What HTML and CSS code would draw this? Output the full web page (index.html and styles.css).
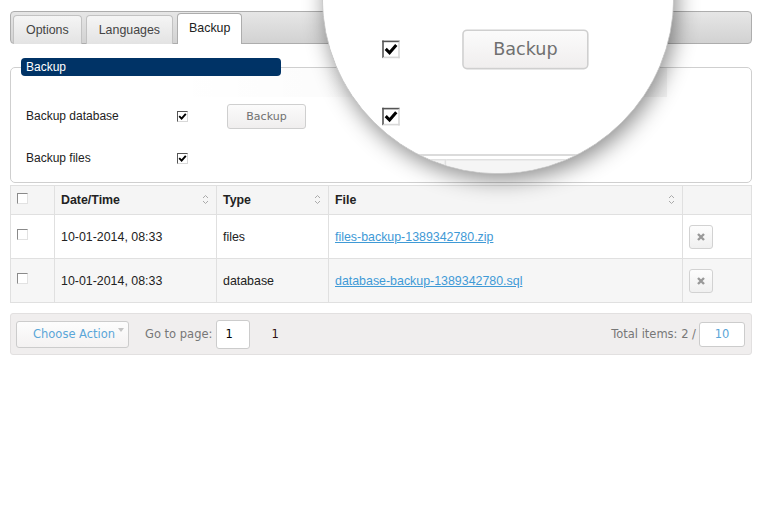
FILE: index.html
```html
<!DOCTYPE html>
<html>
<head>
    <title>Settings - Backup</title>
    <link rel="stylesheet" href="styles.css">
</head>
<body>
    <div class="page" id="page">
        <div class="tabs">
            <span class="tab">Options</span>
            <span class="tab">Languages</span>
            <span class="tab active">Backup</span>
        </div>

        <fieldset class="box">
            <legend>Backup</legend>
            <div class="row">
                <span class="label">Backup database</span>
                <span class="cb checked"><svg viewBox="0 0 9 9" width="9" height="9"><path d="M1.2 4.2 L3.6 6.6 L7.8 1.8" fill="none" stroke="#000" stroke-width="1.9"/></svg></span>
                <button class="btn">Backup</button>
            </div>
            <div class="row">
                <span class="label">Backup files</span>
                <span class="cb checked"><svg viewBox="0 0 9 9" width="9" height="9"><path d="M1.2 4.2 L3.6 6.6 L7.8 1.8" fill="none" stroke="#000" stroke-width="1.9"/></svg></span>
            </div>
        </fieldset>

        <table class="grid">
            <tr class="head">
                <th class="c-check"><span class="cb"></span></th>
                <th class="c-date">Date/Time <svg class="sort" viewBox="0 0 7 11" width="7" height="11"><path d="M1 4 L3.5 1.5 L6 4 M1 7 L3.5 9.5 L6 7" fill="none" stroke="#aaa" stroke-width="1"/></svg></th>
                <th class="c-type">Type <svg class="sort" viewBox="0 0 7 11" width="7" height="11"><path d="M1 4 L3.5 1.5 L6 4 M1 7 L3.5 9.5 L6 7" fill="none" stroke="#aaa" stroke-width="1"/></svg></th>
                <th class="c-file">File <svg class="sort" viewBox="0 0 7 11" width="7" height="11"><path d="M1 4 L3.5 1.5 L6 4 M1 7 L3.5 9.5 L6 7" fill="none" stroke="#aaa" stroke-width="1"/></svg></th>
                <th class="c-act"></th>
            </tr>
            <tr>
                <td class="c-check"><span class="cb"></span></td>
                <td>10-01-2014, 08:33</td>
                <td>files</td>
                <td><a href="#">files-backup-1389342780.zip</a></td>
                <td class="c-act"><span class="del"><svg viewBox="0 0 10 10" width="10" height="10"><path d="M2 2 L8 8 M8 2 L2 8" stroke="#999" stroke-width="2.4"/></svg></span></td>
            </tr>
            <tr class="alt">
                <td class="c-check"><span class="cb"></span></td>
                <td>10-01-2014, 08:33</td>
                <td>database</td>
                <td><a href="#">database-backup-1389342780.sql</a></td>
                <td class="c-act"><span class="del"><svg viewBox="0 0 10 10" width="10" height="10"><path d="M2 2 L8 8 M8 2 L2 8" stroke="#999" stroke-width="2.4"/></svg></span></td>
            </tr>
        </table>

        <div class="footer">
            <span class="action">Choose Action<span class="caret"></span></span>
            <span class="muted">Go to page:</span>
            <span class="page-input">1</span>
            <span class="page-num">1</span>
            <span class="spacer"></span>
            <span class="muted">Total items: 2 /</span>
            <span class="per-page">10</span>
        </div>
    </div>

    <div class="glare"></div>
    <div class="lens"><div class="lens-inner" id="lensInner"></div></div>

    <script>
        // magnified copy of the page inside the lens
        const copy = document.getElementById("page").cloneNode(true);
        copy.removeAttribute("id");
        document.getElementById("lensInner").appendChild(copy);
    </script>
</body>
</html>
```

FILE: styles.css
```css
body {
    margin: 0;
    background: #fff;
    font-family: "Liberation Sans", Arial, sans-serif;
    font-size: 12px;
    color: #222;
    overflow: hidden;
}
.page {
    width: 763px;
    box-sizing: border-box;
    padding: 11px 11px 0 10px;
    background: #fff;
}

/* Tabs */
.tabs {
    display: flex;
    align-items: flex-end;
    gap: 4px;
    height: 31px;
    padding: 0 0 0 2px;
    border: 1px solid #adadad;
    border-radius: 4px;
    background: linear-gradient(#e6e6e6, #d2d2d2);
}
.tab {
    height: 28px;
    line-height: 28px;
    padding: 0 12px;
    margin-bottom: -1px;
    font-size: 12.4px;
    color: #444;
    border: 1px solid #c2c2c2;
    border-bottom: none;
    border-radius: 4px 4px 0 0;
    background: linear-gradient(#f5f5f5, #e3e3e3);
}
.tab.active {
    height: 30px;
    line-height: 29px;
    padding: 0 11px;
    color: #222;
    background: #fff;
    border-color: #adadad;
}

/* Fieldset */
.box {
    margin: 14px 0 0 0;
    padding: 0 10px 11px 10px;
    border: 1px solid #cfcfcf;
    border-radius: 5px;
}
.box legend {
    box-sizing: border-box;
    width: 260px;
    height: 18px;
    line-height: 18px;
    padding: 0 5px;
    color: #fff;
    background: #003366;
    border-radius: 4px;
}
.row {
    display: flex;
    align-items: center;
    height: 26px;
    padding-left: 5px;
}
.row:first-of-type {
    margin-top: 27px;
}
.row + .row {
    margin-top: 16px;
}
.label {
    width: 151px;
}
.cb {
    display: inline-block;
    box-sizing: border-box;
    width: 11px;
    height: 11px;
    border: 1px solid;
    border-color: #8a8a8a #e2e2e2 #e2e2e2 #8a8a8a;
    background: #fff;
    vertical-align: middle;
}
.cb svg {
    display: block;
}
.cb.checked {
    border-color: #555 #d8d8d8 #d8d8d8 #555;
}
.btn {
    margin-left: 39px;
    width: 79px;
    height: 25px;
    border: 1px solid #cfcfcf;
    border-radius: 3px;
    background: linear-gradient(#fbfbfb, #f0eeee);
    font-family: "DejaVu Sans", Verdana, sans-serif;
    font-size: 11px;
    color: #707070;
}

/* Table */
.grid {
    width: 742px;
    margin-top: 2px;
    border-collapse: collapse;
    font-size: 12.4px;
}
.grid th, .grid td {
    border: 1px solid #e0e0e0;
    text-align: left;
    padding: 0 6px;
}
.grid th {
    height: 28px;
    background: #f5f5f5;
    font-weight: bold;
    color: #222;
}
.grid td {
    height: 43px;
}
.grid tr.alt td {
    background: #f6f6f6;
}
.c-check {
    width: 31px;
}
.c-check .cb {
    position: relative;
    top: -3px;
}
.grid th.c-check .cb {
    top: -2px;
}
.c-date {
    width: 149px;
}
.c-type {
    width: 99px;
}
.c-act {
    width: 56px;
}
.sort {
    float: right;
    margin-top: 1px;
    margin-right: 1px;
}
.grid a {
    color: #3f9ad6;
}
.del {
    display: inline-block;
    box-sizing: border-box;
    width: 24px;
    height: 24px;
    border: 1px solid #d2d2d2;
    border-radius: 3px;
    background: linear-gradient(#fdfdfd, #f0f0f0);
    text-align: center;
    vertical-align: middle;
}
.del svg {
    margin-top: 6px;
}

/* Footer */
.footer {
    display: flex;
    align-items: center;
    height: 40px;
    margin-top: 10px;
    padding: 0 6px 0 5px;
    border: 1px solid #e2e0e0;
    border-radius: 3px;
    background: #f0eeee;
    font-family: "DejaVu Sans", Verdana, sans-serif;
    font-size: 11.5px;
}
.action {
    box-sizing: border-box;
    width: 113px;
    height: 27px;
    line-height: 25px;
    padding-left: 16px;
    border: 1px solid #cccccc;
    border-radius: 3px;
    background: linear-gradient(#fdfdfd, #f4f2f2);
    color: #5aa6d8;
    white-space: nowrap;
}
.caret {
    display: inline-block;
    margin-left: 3px;
    border-left: 3px solid transparent;
    border-right: 3px solid transparent;
    border-top: 4px solid #c4c4c4;
    vertical-align: 6px;
}
.muted {
    color: #777;
}
.action + .muted {
    margin-left: 16px;
}
.page-input {
    box-sizing: border-box;
    width: 34px;
    height: 29px;
    line-height: 27px;
    margin-left: 4px;
    padding-left: 8px;
    border: 1px solid #cccccc;
    border-radius: 3px;
    background: #fff;
    color: #000;
}
.page-num {
    margin-left: 21px;
    color: #301010;
}
.spacer {
    flex: 1;
}
.per-page {
    box-sizing: border-box;
    width: 46px;
    height: 25px;
    line-height: 23px;
    margin-left: 3px;
    border: 1px solid #cccccc;
    border-radius: 3px;
    background: #fff;
    text-align: center;
    color: #5aa6d8;
}

/* Magnifier overlay */
.glare {
    position: absolute;
    left: 170px;
    top: 68px;
    width: 497px;
    height: 29px;
    background: linear-gradient(to right, rgba(0, 0, 0, 0), rgba(0, 0, 0, 0.045));
}
.lens {
    position: absolute;
    left: 322px;
    top: -178px;
    width: 352px;
    height: 352px;
    box-sizing: border-box;
    border: 1px solid #c8c8c8;
    border-radius: 50%;
    overflow: hidden;
    background: #fff;
    box-shadow: 3px 6px 22px rgba(0, 0, 0, 0.45);
}
.lens-inner {
    position: absolute;
    left: -224px;
    top: 40px;
    width: 763px;
    transform: scale(1.6);
    transform-origin: 0 0;
}
```
